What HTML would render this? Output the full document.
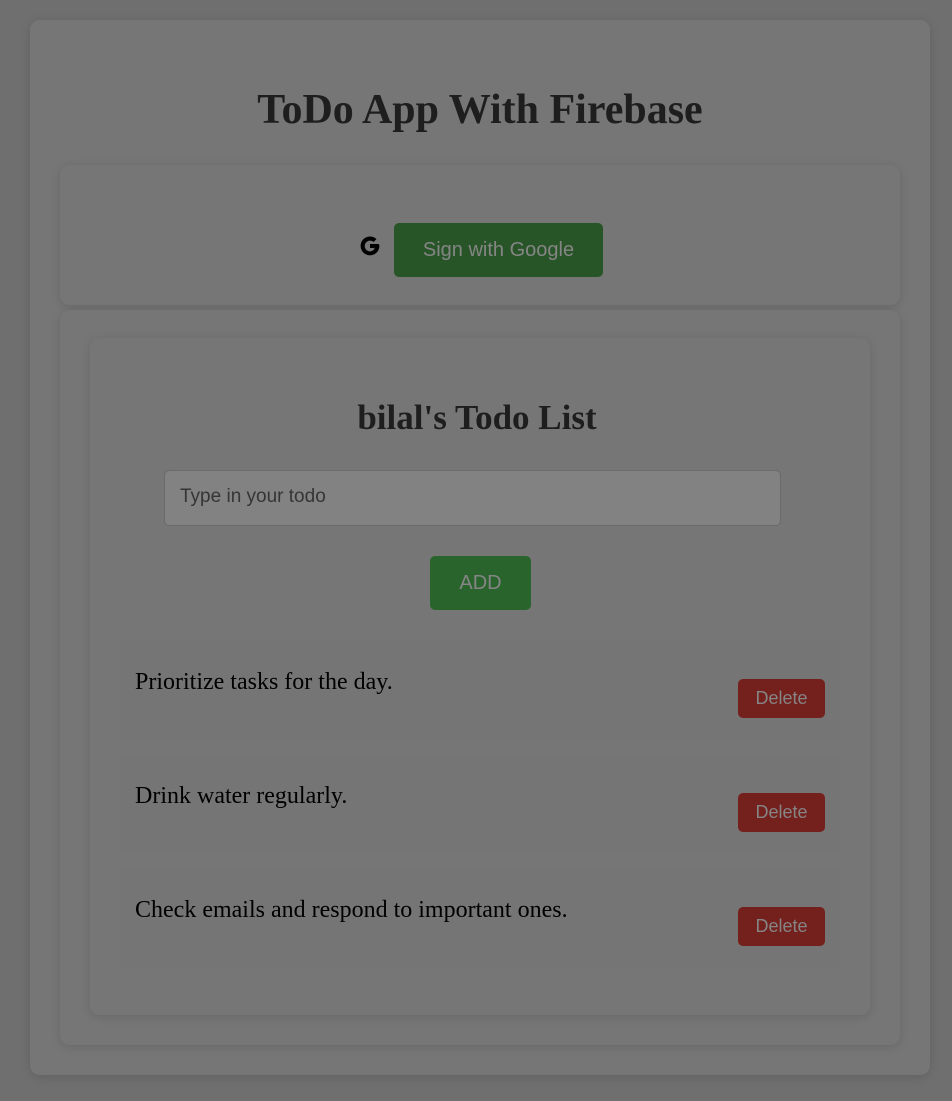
<!DOCTYPE html>
<html><head><style>
*{box-sizing:border-box;margin:0;padding:0}
body{width:952px;height:1101px;background:#6f6f6f;position:relative;overflow:hidden;font-family:"Liberation Serif",serif}
.c{position:absolute;background:#767676;border-radius:10px;box-shadow:0 2px 10px rgba(0,0,0,0.12)}
.t{position:absolute;left:0;width:100%;text-align:center;color:#1e1e1e;font-weight:bold}
.btn{position:absolute;border-radius:5px;font-family:"Liberation Sans",sans-serif;color:#858585;display:flex;align-items:center;justify-content:center}
.row{position:absolute;left:120px;width:720px;height:100px;background:#757575;border-radius:6px}
.row span{position:absolute;left:15px;top:29px;font-size:24px;color:#000}
.del{position:absolute;left:618px;top:39px;width:87px;height:39px;background:#74201c;border-radius:5px;font-family:"Liberation Sans",sans-serif;color:#858585;font-size:18px;display:flex;align-items:center;justify-content:center}
</style></head><body>
<div class="c" style="left:30px;top:20px;width:900px;height:1055px"></div>
<div class="t" style="top:86px;font-size:42px;left:4px">ToDo App With Firebase</div>
<div class="c" style="left:60px;top:165px;width:840px;height:140px"></div>
<svg style="position:absolute;left:358px;top:234px" width="24" height="24" viewBox="0 0 24 24"><path d="M20.5 10H12v4h4.6c-.6 2.2-2.4 3.4-4.6 3.4a5.4 5.4 0 1 1 3.6-9.5l2.9-2.8A9.4 9.4 0 1 0 21.4 12c0-.7-.1-1.4-.9-2z" fill="#000"/></svg>
<div class="btn" style="left:394px;top:223px;width:209px;height:54px;background:#275527;font-size:20px">Sign with Google</div>
<div class="c" style="left:60px;top:310px;width:840px;height:735px"></div>
<div class="c" style="left:90px;top:338px;width:780px;height:677px"></div>
<div class="t" style="top:398px;font-size:35px;left:1px">bilal's Todo List</div>
<div style="position:absolute;left:164px;top:470px;width:617px;height:56px;background:#828282;border:1px solid #6a6a6a;border-radius:5px;font-family:'Liberation Sans',sans-serif;font-size:19px;color:#353535;padding:15px 15px">Type in your todo</div>
<div class="btn" style="left:430px;top:556px;width:101px;height:54px;background:#28642b;font-size:20px">ADD</div>
<div class="row" style="top:640px"><span>Prioritize tasks for the day.</span><div class="del">Delete</div></div>
<div class="row" style="top:754px"><span>Drink water regularly.</span><div class="del">Delete</div></div>
<div class="row" style="top:868px"><span>Check emails and respond to important ones.</span><div class="del">Delete</div></div>
</body></html>
